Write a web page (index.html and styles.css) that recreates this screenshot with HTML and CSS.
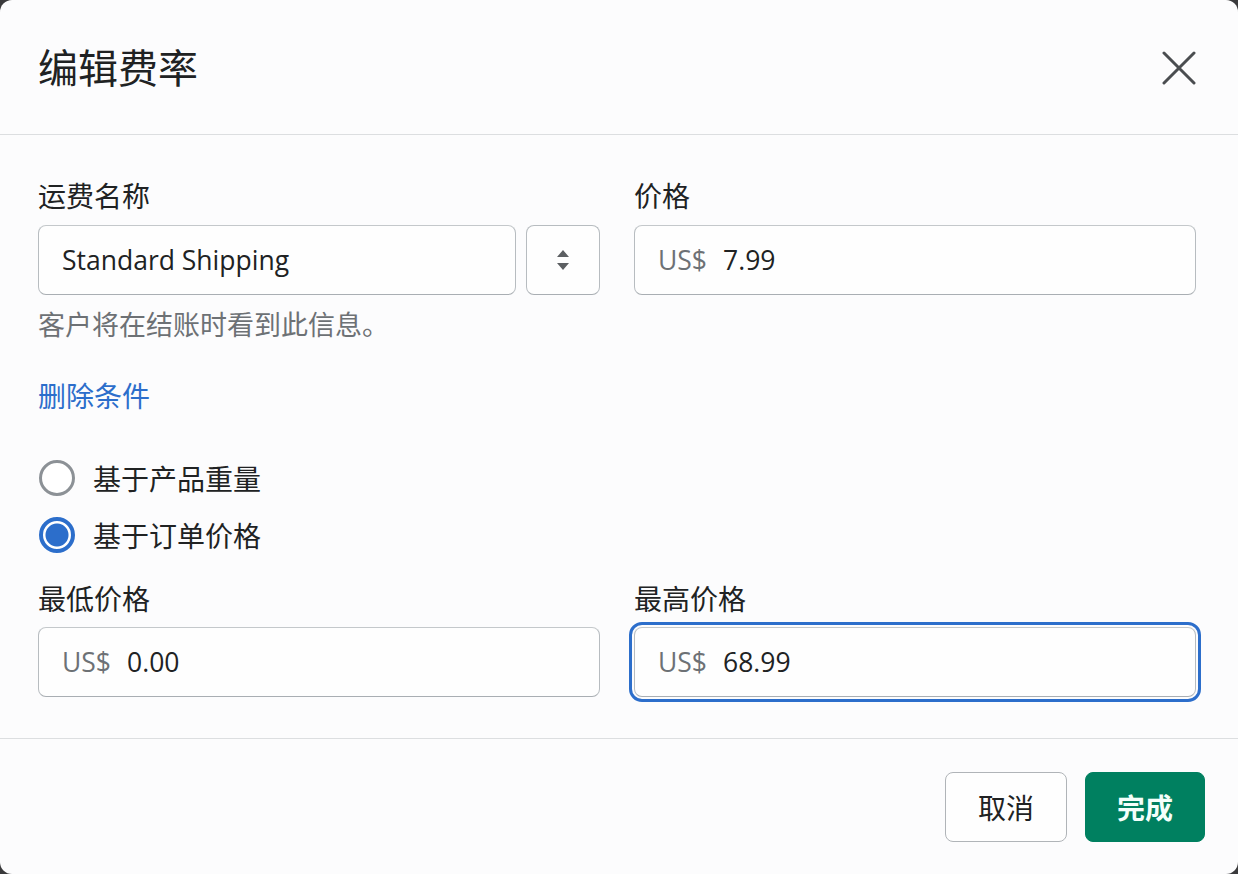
FILE: index.html
```html
<!DOCTYPE html>
<html lang="zh-CN">
<head>
<meta charset="utf-8">
<title>编辑费率</title>
<link rel="stylesheet" href="styles.css">
</head>
<body>
<div class="modal">
  <header class="modal-header">
    <h1 class="modal-title">编辑费率</h1>
    <button class="close-btn" aria-label="关闭">
      <svg width="34" height="34" viewBox="0 0 34 34"><path d="M2 2 L32 32 M32 2 L2 32" stroke="#4a4d50" stroke-width="3" stroke-linecap="round" fill="none"/></svg>
    </button>
  </header>
  <section class="modal-body">
    <div class="row">
      <div class="field">
        <label class="label">运费名称</label>
        <div class="name-row">
          <div class="input grow"><span class="value">Standard Shipping</span></div>
          <div class="stepper">
            <svg width="14" height="22" viewBox="0 0 14 22"><path d="M7 1 L13 8 L1 8 Z M7 21 L13 14 L1 14 Z" fill="#5c5f62"/></svg>
          </div>
        </div>
        <p class="help">客户将在结账时看到此信息。</p>
      </div>
      <div class="field">
        <label class="label">价格</label>
        <div class="input"><span class="prefix">US$</span><span class="value">7.99</span></div>
      </div>
    </div>
    <a class="link" href="#">删除条件</a>
    <div class="radios">
      <div class="radio-row"><span class="radio"></span><span class="radio-label">基于产品重量</span></div>
      <div class="radio-row"><span class="radio checked"></span><span class="radio-label">基于订单价格</span></div>
    </div>
    <div class="row bottom">
      <div class="field">
        <label class="label">最低价格</label>
        <div class="input"><span class="prefix">US$</span><span class="value">0.00</span></div>
      </div>
      <div class="field">
        <label class="label">最高价格</label>
        <div class="input focused"><span class="prefix">US$</span><span class="value">68.99</span></div>
      </div>
    </div>
  </section>
  <footer class="modal-footer">
    <button class="btn">取消</button>
    <button class="btn primary">完成</button>
  </footer>
</div>
</body>
</html>
```
FILE: styles.css
```css
* { box-sizing: border-box; }
html, body { margin: 0; padding: 0; }
body {
  background: #3a3a3c;
  width: 1238px;
  height: 874px;
  overflow: hidden;
  font-family: "Open Sans", "Noto Sans CJK SC", sans-serif;
  color: #202223;
}
.modal {
  width: 1238px;
  height: 874px;
  background: #fcfcfd;
  border-radius: 12px;
  display: flex;
  flex-direction: column;
}
.modal-header {
  height: 135px;
  border-bottom: 1px solid #dcdee0;
  display: flex;
  align-items: center;
  justify-content: space-between;
  padding: 0 42px 0 38px;
}
.modal-title {
  margin: 0;
  font-family: "Noto Sans CJK SC", sans-serif;
  font-weight: 400;
  font-size: 40px;
  line-height: 50px;
  margin-top: -2px;
}
.close-btn {
  background: none;
  border: none;
  padding: 0;
  width: 34px;
  height: 34px;
  margin-top: 2px;
  display: flex;
}
.modal-body {
  height: 604px;
  border-bottom: 1px solid #dcdee0;
  padding: 42px 42px 0 38px;
  display: flex;
  flex-direction: column;
}
.row {
  display: grid;
  grid-template-columns: 562px 562px;
  column-gap: 34px;
}
.field { display: flex; flex-direction: column; }
.label {
  font-family: "Noto Sans CJK SC", sans-serif;
  font-size: 28px;
  line-height: 36px;
  margin-bottom: 12px;
}
.bottom .label { margin-bottom: 11px; }
.name-row { display: flex; gap: 10px; }
.input {
  height: 70px;
  border: 1.5px solid #b7bcc0;
  border-top-color: #c4c8cb;
  border-bottom-color: #a9aeb3;
  border-radius: 8px;
  background: #fefefe;
  display: flex;
  align-items: center;
  padding: 0 23px;
  font-size: 26.5px;
}
.grow { flex: 1; }
.prefix { color: #6d7175; margin-right: 16px; }
.value { color: #202223; }
.stepper {
  width: 74px;
  height: 70px;
  border: 1.5px solid #b7bcc0;
  border-bottom-color: #a9aeb3;
  border-radius: 8px;
  background: #fefefe;
  display: flex;
  align-items: center;
  justify-content: center;
}
.help {
  margin: 12px 0 0;
  font-family: "Noto Sans CJK SC", sans-serif;
  font-size: 27px;
  line-height: 34px;
  color: #6d7175;
}
.link {
  margin-top: 36px;
  font-family: "Noto Sans CJK SC", sans-serif;
  font-size: 28px;
  line-height: 36px;
  color: #2c6ecb;
  text-decoration: none;
  align-self: flex-start;
}
.radios {
  margin-top: 43px;
  display: flex;
  flex-direction: column;
  gap: 13px;
}
.radio-row {
  height: 44px;
  display: flex;
  align-items: center;
  gap: 18px;
  padding-left: 1px;
}
.radio {
  width: 36px;
  height: 36px;
  border-radius: 50%;
  border: 3px solid #8c9196;
  background: #fff;
}
.radio.checked {
  border: 4px solid #2c6ecb;
  background: radial-gradient(circle, #2c6ecb 0 11px, #fff 12px);
}
.radio-label {
  font-family: "Noto Sans CJK SC", sans-serif;
  font-size: 28px;
  line-height: 36px;
}
.bottom { margin-top: 23px; }
.focused {
  outline: 3px solid #2c6ecb;
  outline-offset: 2px;
}
.modal-footer {
  flex: 1;
  display: flex;
  justify-content: flex-end;
  align-items: center;
  gap: 18px;
  padding: 0 33px 0 0;
}
.btn {
  height: 70px;
  min-width: 122px;
  padding: 0 28px;
  border-radius: 8px;
  border: 1.5px solid #b0b4b8;
  background: #fefefe;
  font-family: "Noto Sans CJK SC", sans-serif;
  font-size: 28px;
  color: #202223;
}
.btn.primary {
  background: #008060;
  border-color: #008060;
  color: #f4fffb;
  font-weight: 600;
  min-width: 120px;
}
```
